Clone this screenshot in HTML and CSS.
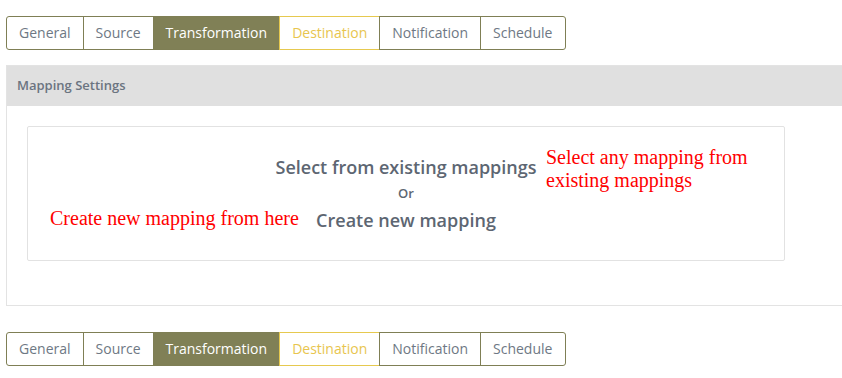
FILE: index.html
```html
<!DOCTYPE html>
<html lang="en">
  <head>
    <meta charset="utf-8" />
    <title>Mapping Settings</title>
    <link rel="stylesheet" href="styles.css">
  </head>
  <body>
    <!-- Wizard steps -->
    <div class="steps">
      <span class="step">General</span>
      <span class="step">Source</span>
      <span class="step active">Transformation</span>
      <span class="step pending">Destination</span>
      <span class="step">Notification</span>
      <span class="step">Schedule</span>
    </div>

    <div class="panel">
      <div class="panel-heading">Mapping Settings</div>
      <div class="panel-body">
        <div class="mapping-box">
          <div class="mapping-link">Select from existing mappings</div>
          <div class="mapping-or">Or</div>
          <div class="mapping-link">Create new mapping</div>

          <span class="note note-select">Select any mapping from<br>existing mappings</span>
          <span class="note note-create">Create new mapping from here</span>
        </div>
      </div>
    </div>

    <div class="steps">
      <span class="step">General</span>
      <span class="step">Source</span>
      <span class="step active">Transformation</span>
      <span class="step pending">Destination</span>
      <span class="step">Notification</span>
      <span class="step">Schedule</span>
    </div>
  </body>
</html>
```

FILE: styles.css
```css
body {
  margin: 0;
  padding: 16px 0 0 6px;
  font-family: 'Open Sans', 'Liberation Sans', sans-serif;
  color: #6b7480;
  background: #fff;
  overflow: hidden;
}

/* Step tabs */
.steps {
  display: flex;
  padding-left: 1px;
}

.step {
  height: 32px;
  line-height: 32px;
  padding: 0 12px;
  margin-left: -1px;
  font-size: 14px;
  color: #6e7884;
  border: 1px solid #7f7f55;
}

.step:first-child {
  border-radius: 3px 0 0 3px;
}

.step:last-child {
  padding-right: 13px;
  border-radius: 0 3px 3px 0;
}

.step.active {
  background: #808056;
  color: #fff;
}

.step.pending {
  color: #e8c54e;
  border-color: #e6c94f;
}

/* Panel */
.panel {
  width: 860px;
  margin: 15px 0 26px;
  border: 1px solid #e3e3e3;
}

.panel-heading {
  height: 40px;
  line-height: 39px;
  padding: 0 10px;
  background: #e0e0e0;
  font-size: 13px;
  font-weight: 600;
  color: #6b7480;
}

.panel-body {
  padding: 20px 20px 44px;
}

.mapping-box {
  position: relative;
  width: 758px;
  height: 135px;
  padding-top: 27px;
  box-sizing: border-box;
  border: 1px solid #e2e2e2;
  border-radius: 2px;
  text-align: center;
}

.mapping-link {
  font-size: 18px;
  font-weight: 600;
  line-height: 26px;
  color: #5d6672;
}

.mapping-or {
  font-size: 13px;
  font-weight: 600;
  line-height: 27px;
  color: #5d6672;
}

/* Red callouts */
.note {
  position: absolute;
  font-family: 'Liberation Serif', 'Times New Roman', serif;
  font-size: 20px;
  line-height: 23px;
  color: #ff0000;
  text-align: left;
}

.note-select {
  left: 518px;
  top: 19px;
}

.note-create {
  left: 22px;
  top: 80px;
}
```
